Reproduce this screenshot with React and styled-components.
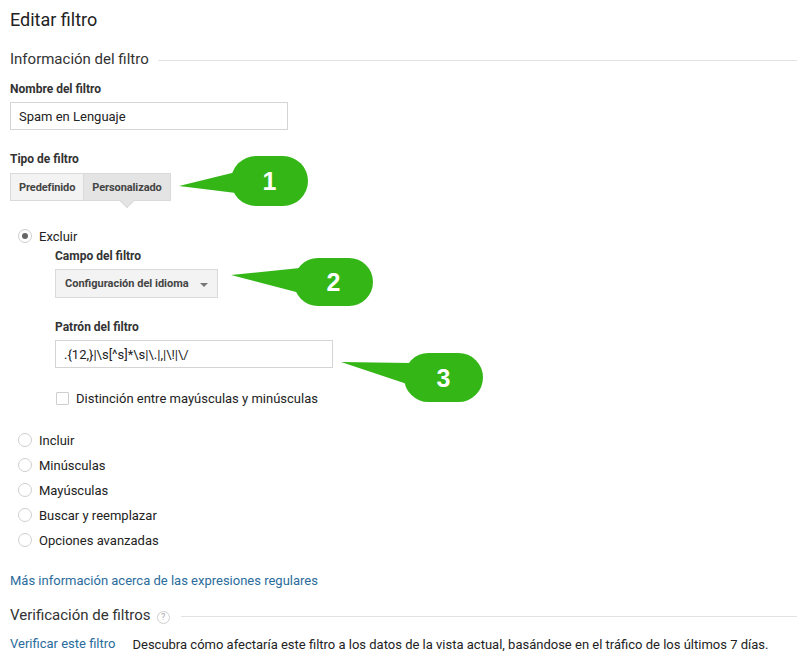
import React from 'react';
import styled, { createGlobalStyle } from 'styled-components';

const GlobalStyle = createGlobalStyle`
  body {
    margin: 0;
    background: #fff;
    font-family: Roboto, 'Liberation Sans', Arial, sans-serif;
    color: #222;
  }
`;

const Page = styled.div`
  position: relative;
  width: 797px;
  height: 672px;
  padding: 8px 0 0 10px;
  box-sizing: border-box;
  overflow: hidden;
`;

const Title = styled.h1`
  margin: 0;
  font-size: 18px;
  line-height: 24px;
  font-weight: 400;
  color: #222;
`;

const SectionHeader = styled.div`
  display: flex;
  align-items: center;
  gap: ${(p) => p.gap || 9}px;
  margin-top: ${(p) => p.top}px;
  font-size: 15px;
  line-height: 20px;
  color: #333;

  &::after {
    content: '';
    flex: 1;
    height: 1px;
    background: #e2e2e2;
    margin-top: 2px;
  }
`;

const Label = styled.div`
  margin-top: ${(p) => p.top}px;
  font-size: 12px;
  line-height: 16px;
  font-weight: 700;
  color: #333;
`;

const TextInput = styled.div`
  margin-top: 5px;
  width: ${(p) => p.width}px;
  height: 28px;
  box-sizing: border-box;
  border: 1px solid #d4d4d4;
  padding: 0 8px;
  display: flex;
  align-items: center;
  font-size: 13px;
  color: #222;
`;

const ButtonGroup = styled.div`
  display: flex;
  margin-top: 6px;
`;

const ToggleButton = styled.div`
  position: relative;
  height: 28px;
  box-sizing: border-box;
  padding: 0 8px;
  display: flex;
  align-items: center;
  font-size: 11px;
  font-weight: 700;
  letter-spacing: -0.1px;
  color: #444;
  background: ${(p) => (p.active ? '#e4e4e4' : '#f3f3f3')};
  border: 1px solid #dadada;
  & + & {
    border-left: none;
  }
  ${(p) =>
    p.active &&
    `
    &::after {
      content: '';
      position: absolute;
      left: 50%;
      bottom: -6px;
      width: 9px;
      height: 9px;
      margin-left: -5px;
      background: #e4e4e4;
      border-right: 1px solid #dadada;
      border-bottom: 1px solid #dadada;
      transform: rotate(45deg);
    }
  `}
`;

const OptionRow = styled.div`
  display: flex;
  align-items: center;
  height: 20px;
  margin-top: ${(p) => p.top || 5}px;
  padding-left: ${(p) => p.indent || 8}px;
  gap: 7px;
  font-size: 13px;
  color: #222;
`;

const Radio = styled.span`
  width: 14px;
  height: 14px;
  box-sizing: border-box;
  border-radius: 50%;
  border: 1px solid #cfcfcf;
  background: #fff;
  display: flex;
  align-items: center;
  justify-content: center;

  &::after {
    content: '';
    width: 6px;
    height: 6px;
    border-radius: 50%;
    background: ${(p) => (p.checked ? '#666' : 'transparent')};
  }
`;

const Checkbox = styled.span`
  width: 13px;
  height: 13px;
  box-sizing: border-box;
  border: 1px solid #cfcfcf;
  border-radius: 1px;
  background: #fff;
`;

const Nested = styled.div`
  padding-left: 45px;
`;

const Select = styled.div`
  margin-top: 5px;
  width: 163px;
  height: 29px;
  box-sizing: border-box;
  border: 1px solid #dadada;
  background: #f3f3f3;
  display: flex;
  align-items: center;
  justify-content: space-between;
  padding: 0 9px 0 9px;
  font-size: 11px;
  font-weight: 700;
  color: #444;

  &::after {
    content: '';
    border-left: 4px solid transparent;
    border-right: 4px solid transparent;
    border-top: 4px solid #777;
    margin-top: 2px;
  }
`;

const Link = styled.a`
  color: #2a6c9c;
  text-decoration: none;
  font-size: 13px;
  line-height: 20px;
`;

const LinkLine = styled.div`
  margin-top: 20px;
  line-height: 20px;
`;

const Help = styled.span`
  width: 13px;
  height: 13px;
  box-sizing: border-box;
  border-radius: 50%;
  border: 1px solid #d0d0d0;
  color: #aaa;
  font-size: 9px;
  line-height: 11px;
  display: inline-flex;
  align-items: center;
  justify-content: center;
  margin-left: 6px;
`;

const VerifyRow = styled.div`
  display: flex;
  align-items: center;
  gap: 17px;
  margin-top: 9px;
  height: 20px;
  font-size: 13px;
  color: #222;
`;

const CalloutSvg = styled.svg`
  position: absolute;
  overflow: visible;
  pointer-events: none;
`;

const Callout = ({ n, tip, base, box }) => {
  const x0 = tip[0];
  const y0 = box.y;
  const w = box.x + box.w - x0;
  const h = box.h;
  const pts = [tip, base[0], base[1]].map(([x, y]) => `${x - x0},${y - y0}`).join(' ');
  return (
    <CalloutSvg style={{ left: x0, top: y0 }} width={w} height={h} viewBox={`0 0 ${w} ${h}`}>
      <polygon points={pts} fill="#33b616" />
      <rect x={box.x - x0} y={0} width={box.w} height={box.h} rx={box.h / 2} fill="#33b616" />
      <text
        x={box.x - x0 + box.w / 2}
        y={h / 2 + 9}
        textAnchor="middle"
        fill="#fff"
        fontSize="25"
        fontWeight="700"
        fontFamily="'Liberation Sans', Arial, sans-serif"
      >
        {n}
      </text>
    </CalloutSvg>
  );
};

const others = ['Incluir', 'Minúsculas', 'Mayúsculas', 'Buscar y reemplazar', 'Opciones avanzadas'];

export default function App() {
  return (
    <>
      <GlobalStyle />
      <Page>
        <Title>Editar filtro</Title>
        <SectionHeader top={17}>Información del filtro</SectionHeader>

        <Label top={12}>Nombre del filtro</Label>
        <TextInput width={278}>Spam en Lenguaje</TextInput>

        <Label top={21}>Tipo de filtro</Label>
        <ButtonGroup>
          <ToggleButton>Predefinido</ToggleButton>
          <ToggleButton active>Personalizado</ToggleButton>
        </ButtonGroup>

        <OptionRow top={25}>
          <Radio checked />
          Excluir
        </OptionRow>
        <Nested>
          <Label top={2}>Campo del filtro</Label>
          <Select>Configuración del idioma</Select>
          <Label top={21}>Patrón del filtro</Label>
          <TextInput width={278}>.{'{12,}'}|\s[^s]*\s|\.|,|\!|\/</TextInput>
          <OptionRow top={20} indent={1}>
            <Checkbox />
            Distinción entre mayúsculas y minúsculas
          </OptionRow>
        </Nested>

        {others.map((o, i) => (
          <OptionRow key={o} top={i === 0 ? 22 : 5}>
            <Radio />
            {o}
          </OptionRow>
        ))}

        <LinkLine>
          <Link href="#">Más información acerca de las expresiones regulares</Link>
        </LinkLine>

        <SectionHeader top={14} gap={11}>
          <span>
            Verificación de filtros
            <Help>?</Help>
          </span>
        </SectionHeader>

        <VerifyRow>
          <Link href="#">Verificar este filtro</Link>
          <span>Descubra cómo afectaría este filtro a los datos de la vista actual, basándose en el tráfico de los últimos 7 días.</span>
        </VerifyRow>

        <Callout n="1" tip={[179, 186]} base={[[236, 172], [236, 193]]} box={{ x: 231, y: 156, w: 77, h: 50 }} />
        <Callout n="2" tip={[231, 275]} base={[[300, 268], [300, 293]]} box={{ x: 294, y: 258, w: 79, h: 48 }} />
        <Callout n="3" tip={[341, 362]} base={[[410, 363], [410, 385]]} box={{ x: 404, y: 353, w: 79, h: 49 }} />
      </Page>
    </>
  );
}
